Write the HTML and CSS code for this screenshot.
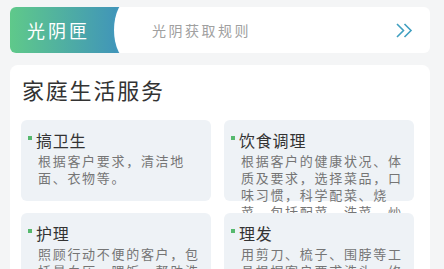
FILE: index.html
```html
<!DOCTYPE html>
<html lang="zh-CN">
<head>
    <meta charset="UTF-8">
    <meta name="viewport" content="width=device-width, initial-scale=1.0">
    <title>光阴匣</title>
    <link rel="stylesheet" href="styles.css">
</head>
<body>

    <div class="rule-bar">
        <div class="rule-tab">光阴匣</div>
        <div class="rule-text">光阴获取规则</div>
        <svg class="rule-arrow" width="17" height="15" viewBox="0 0 17 15">
            <polyline points="1,1 7.5,7.5 1,14" fill="none" stroke="#3f9fc0" stroke-width="1.6"/>
            <polyline points="8.5,1 15,7.5 8.5,14" fill="none" stroke="#3f9fc0" stroke-width="1.6"/>
        </svg>
    </div>

    <div class="service-box">
        <h2 class="service-title">家庭生活服务</h2>
        <div class="service-grid">
            <div class="service-item">
                <div class="item-name"><span class="dot"></span>搞卫生</div>
                <p class="item-desc">根据客户要求，清洁地面、衣物等。</p>
            </div>
            <div class="service-item">
                <div class="item-name"><span class="dot"></span>饮食调理</div>
                <p class="item-desc">根据客户的健康状况、体质及要求，选择菜品，口味习惯，科学配菜、烧菜、包括配菜、洗菜、炒菜等。</p>
            </div>
            <div class="service-item">
                <div class="item-name"><span class="dot"></span>护理</div>
                <p class="item-desc">照顾行动不便的客户，包括量血压、喂饭、帮助洗澡等。</p>
            </div>
            <div class="service-item">
                <div class="item-name"><span class="dot"></span>理发</div>
                <p class="item-desc">用剪刀、梳子、围脖等工具根据客户要求洗头、修剪头发等。</p>
            </div>
        </div>
    </div>

</body>
</html>
```

FILE: styles.css
```css
body {
    margin: 0;
    padding: 7px 14px 0 10px;
    background: #f4f5f6;
    font-family: "Noto Sans CJK SC", "Noto Sans", sans-serif;
    height: 269px;
    box-sizing: border-box;
    overflow: hidden;
}

.rule-bar {
    display: flex;
    align-items: center;
    height: 46px;
    background: #fff;
    border-radius: 6px;
    padding-right: 17px;
}

.rule-tab {
    position: relative;
    overflow: hidden;
    width: 112px;
    height: 100%;
    box-sizing: border-box;
    padding-left: 17px;
    display: flex;
    align-items: center;
    border-radius: 6px 0 0 6px;
    background: linear-gradient(90deg, #5fc98a, #3f93bb);
    color: #fff;
    font-size: 18px;
    letter-spacing: 3px;
}

.rule-tab::after {
    content: "";
    position: absolute;
    left: 104px;
    top: -7px;
    width: 30px;
    height: 60px;
    border-radius: 50%;
    background: #fff;
    box-shadow: -1px 0 3px rgba(70, 160, 200, 0.45);
}

.rule-text {
    flex: 1;
    margin-left: 30px;
    font-size: 14px;
    letter-spacing: 2.5px;
    color: #a0a0a0;
}

.rule-arrow {
    display: block;
}

.service-box {
    margin-top: 12px;
    background: #fff;
    border-radius: 8px;
    padding: 10px 16px 20px 11px;
    height: 300px;
}

.service-title {
    margin: 0 0 17px 1px;
    font-size: 22px;
    line-height: 28px;
    font-weight: normal;
    letter-spacing: 1.8px;
    color: #333;
}

.service-grid {
    display: grid;
    grid-template-columns: 190px 190px;
    column-gap: 13px;
    row-gap: 12px;
}

.service-item {
    height: 81px;
    box-sizing: border-box;
    padding: 9px 10px 0 7px;
    background: #eef2f6;
    border-radius: 6px;
}

.item-name {
    display: flex;
    align-items: flex-start;
    font-size: 16px;
    line-height: 23px;
    letter-spacing: 0.8px;
    color: #333;
}

.dot {
    width: 4px;
    height: 4px;
    margin: 7px 4px 0 0;
    background: #56b96e;
}

.item-desc {
    margin: 0;
    padding-left: 10px;
    font-size: 13px;
    line-height: 17px;
    letter-spacing: 1.7px;
    color: #757575;
}
```
